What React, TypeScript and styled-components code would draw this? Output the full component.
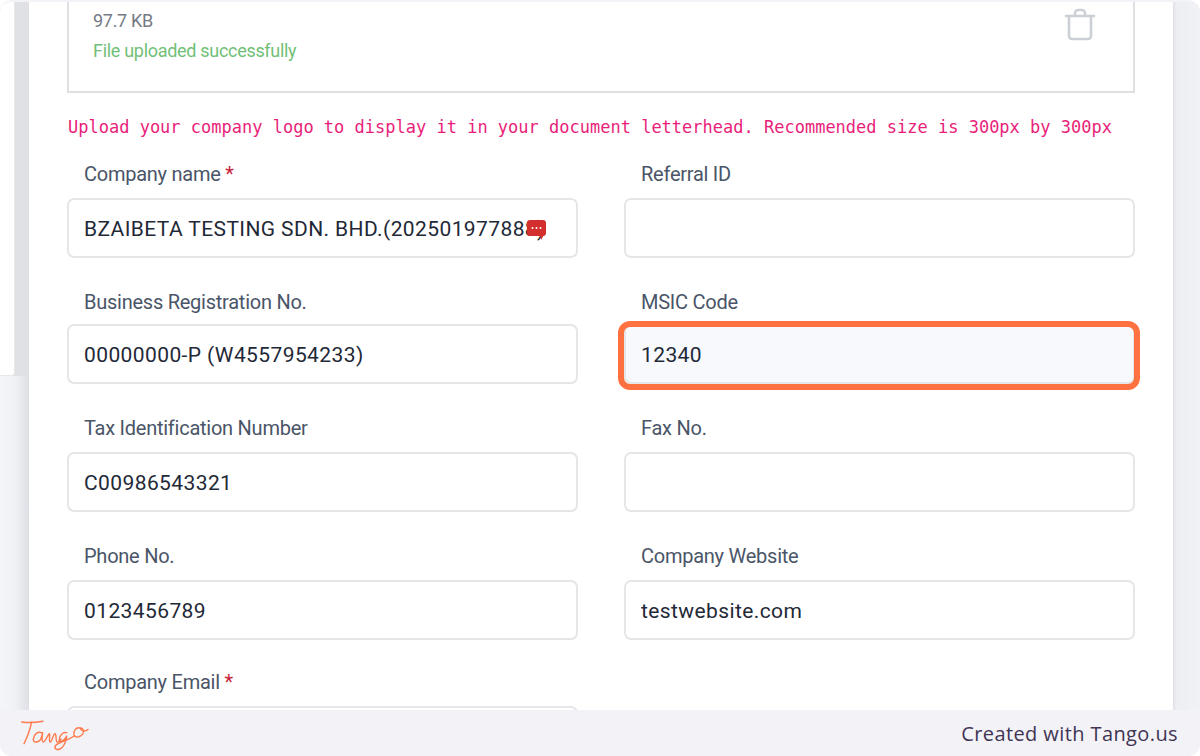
import React from "react";
import styled, { createGlobalStyle } from "styled-components";

const Global = createGlobalStyle`
  html, body { margin: 0; padding: 0; background: #fff; }
  * { box-sizing: border-box; }
`;

const Frame = styled.div`
  width: 1200px;
  height: 756px;
  background: #f3f2f7;
  border-radius: 12px;
  overflow: hidden;
  display: flex;
  flex-direction: column;
  font-family: Roboto, "Liberation Sans", sans-serif;
`;

const Shot = styled.div`
  margin-top: 2px;
  height: 708px;
  display: flex;
  overflow: hidden;
  background: #f0f1f5;
  border-radius: 10px 10px 0 0;
`;

const LeftRail = styled.div`
  width: 29px;
  flex: none;
  background: linear-gradient(90deg, #f4f5f8 0, #f1f2f5 14px, #e0e1e6 28px, #dcdde1 29px);
`;

const Sidebar = styled.div`
  width: 15px;
  height: 374px;
  background: #fff;
  border-right: 1px solid #e8e8ea;
  border-bottom: 1px solid #e8e8ea;
  border-bottom-right-radius: 4px;
  box-shadow: 13px 0 0 #e0e1e5;
`;

const Panel = styled.main`
  width: 1144px;
  flex: none;
  background: #fff;
  padding: 0 38px;
`;

const RightRail = styled.div`
  flex: 1;
  background: linear-gradient(90deg, #e0e1e6 0, #eceef2 3px, #f1f2f6 100%);
`;

const UploadBox = styled.div`
  height: 91px;
  border: 2px solid #e0e0e2;
  border-top: 0;
  padding: 0 37px 0 24px;
  display: flex;
  justify-content: space-between;
  align-items: flex-start;
`;

const FileInfo = styled.div`
  display: flex;
  flex-direction: column;
  gap: 9px;
  padding-top: 9px;
`;

const FileSize = styled.div`
  font-size: 18px;
  line-height: 20px;
  color: #757a85;
  letter-spacing: -0.3px;
`;

const FileStatus = styled.div`
  font-size: 18px;
  line-height: 21px;
  color: #72c077;
  letter-spacing: -0.3px;
`;

const TrashIcon = styled.svg`
  width: 32px;
  height: 34px;
  margin-top: 6px;
`;

const Hint = styled.p`
  margin: 24px 0 0 1px;
  font-family: "DejaVu Sans Mono", monospace;
  font-size: 17px;
  line-height: 20px;
  color: #e91e7a;
  white-space: nowrap;
`;

const FormGrid = styled.div`
  margin-top: 25px;
  display: grid;
  grid-template-columns: 511px 511px;
  grid-template-rows: 128px 126px 128px 126px auto;
  column-gap: 46px;
`;

const Field = styled.div`
  display: flex;
  flex-direction: column;
`;

const Label = styled.label<{ $tight?: boolean }>`
  padding-left: 17px;
  font-size: 20px;
  line-height: 24px;
  height: 24px;
  color: #4a5568;
  letter-spacing: -0.25px;
  margin-bottom: ${(p) => (p.$tight ? "10px" : "12px")};
  white-space: nowrap;
`;

const Required = styled.span`
  color: #c81e3a;
`;

const InputBox = styled.div<{ $active?: boolean }>`
  position: relative;
  height: 60px;
  border: 2px solid #e6e6e8;
  border-radius: 7px;
  padding: 2px 15px 0;
  display: flex;
  align-items: center;
  font-size: 21px;
  letter-spacing: 0.4px;
  color: #1f2937;
  background: ${(p) => (p.$active ? "#f7f9fd" : "#fff")};
  white-space: nowrap;
`;

const Value = styled.span`
  display: block;
  max-width: 463px;
  overflow: hidden;
`;

const Highlight = styled.div`
  position: absolute;
  top: -5px;
  left: -8px;
  right: -7px;
  bottom: -8px;
  border: 6px solid #ff7140;
  border-radius: 12px;
  pointer-events: none;
`;

const DotsBadge = styled.svg`
  position: absolute;
  left: 458px;
  top: 19px;
  width: 20px;
  height: 22px;
`;

const Footer = styled.footer`
  height: 46px;
  flex: none;
  background: #f3f2f7;
  padding: 0 22px 0 20px;
  display: flex;
  align-items: center;
  justify-content: space-between;
`;

const TangoSvg = styled.svg`
  width: 70px;
  height: 34px;
  margin-top: 4px;
`;

const Credit = styled.span`
  font-family: "Open Sans", "Noto Sans", sans-serif;
  font-size: 20px;
  letter-spacing: 0.4px;
  color: #3f3554;
`;

const TangoMark = () => (
  <TangoSvg viewBox="0 0 70 34" fill="none" stroke="#ff7a4d" strokeWidth="1.4" strokeLinecap="round" strokeLinejoin="round" aria-label="Tango">
    <path d="M1.7 4C9 5 16 4.500 23 3.300M11.700 4C10 11 7.500 19 4 25.700" />
    <path d="M21.700 14.700C18 13 14 16 13.300 21C13 25 18 24.500 20 22.300C21.500 20.500 22 17 22.700 14.700C22 18 21.500 24 23.300 24C25.500 24 27 18 29.300 15.700C30.500 15 28.500 23 30 24C32 24.500 33 15.700 35 15.700C37 16 35 24 37.500 24C39 24 40 23 41 21" />
    <path d="M46.700 14.700C43 13.500 40 17 39.300 21C39 25 43.500 24 46.700 18C46 23 44 29 40 31C36 32.500 33.500 30 36 27C40 23.500 49 22 54 18" />
    <path d="M60 10C56 9 53 13 54 17C55.500 20.500 61 19.500 63 15.500C64.500 12 62.500 9.500 60 10C61 13 64.500 14 68 11.500" />
  </TangoSvg>
);

const Input = ({ value, active, children }: { value?: string; active?: boolean; children?: React.ReactNode }) => (
  <InputBox $active={active}>
    {value && <Value>{value}</Value>}
    {children}
    {active && <Highlight />}
  </InputBox>
);

export default function App() {
  return (
    <Frame>
      <Global />
      <Shot>
        <LeftRail>
          <Sidebar />
        </LeftRail>
        <Panel>
          <UploadBox>
            <FileInfo>
              <FileSize>97.7 KB</FileSize>
              <FileStatus>File uploaded successfully</FileStatus>
            </FileInfo>
            <TrashIcon viewBox="0 0 32 34" fill="none" stroke="#cbd0d6" strokeWidth="2.6" strokeLinecap="round" strokeLinejoin="round">
              <path d="M2 8h28M5 8v20a3 3 0 0 0 3 3h16a3 3 0 0 0 3-3V8M11 8V5a3 3 0 0 1 3-3h4a3 3 0 0 1 3 3v3" />
            </TrashIcon>
          </UploadBox>
          <Hint>Upload your company logo to display it in your document letterhead. Recommended size is 300px by 300px</Hint>
          <FormGrid>
            <Field>
              <Label>Company name <Required>*</Required></Label>
              <Input value="BZAIBETA TESTING SDN. BHD.(202501977888)">
                <DotsBadge viewBox="0 0 20 22">
                  <rect x="0" y="1" width="19" height="16" rx="3" fill="#d32f2f" />
                  <path d="M13 16l1 5 3-5z" fill="#d32f2f" />
                  <circle cx="5.500" cy="9" r="1" fill="#fff" />
                  <circle cx="9.500" cy="9" r="1" fill="#fff" />
                  <circle cx="13.500" cy="9" r="1" fill="#fff" />
                </DotsBadge>
              </Input>
            </Field>
            <Field>
              <Label>Referral ID</Label>
              <Input />
            </Field>
            <Field>
              <Label $tight>Business Registration No.</Label>
              <Input value="00000000-P (W4557954233)" />
            </Field>
            <Field>
              <Label $tight>MSIC Code</Label>
              <Input value="12340" active />
            </Field>
            <Field>
              <Label>Tax Identification Number</Label>
              <Input value="C00986543321" />
            </Field>
            <Field>
              <Label>Fax No.</Label>
              <Input />
            </Field>
            <Field>
              <Label>Phone No.</Label>
              <Input value="0123456789" />
            </Field>
            <Field>
              <Label>Company Website</Label>
              <Input value="testwebsite.com" />
            </Field>
            <Field>
              <Label>Company Email <Required>*</Required></Label>
              <Input />
            </Field>
          </FormGrid>
        </Panel>
        <RightRail />
      </Shot>
      <Footer>
        <TangoMark />
        <Credit>Created with Tango.us</Credit>
      </Footer>
    </Frame>
  );
}
